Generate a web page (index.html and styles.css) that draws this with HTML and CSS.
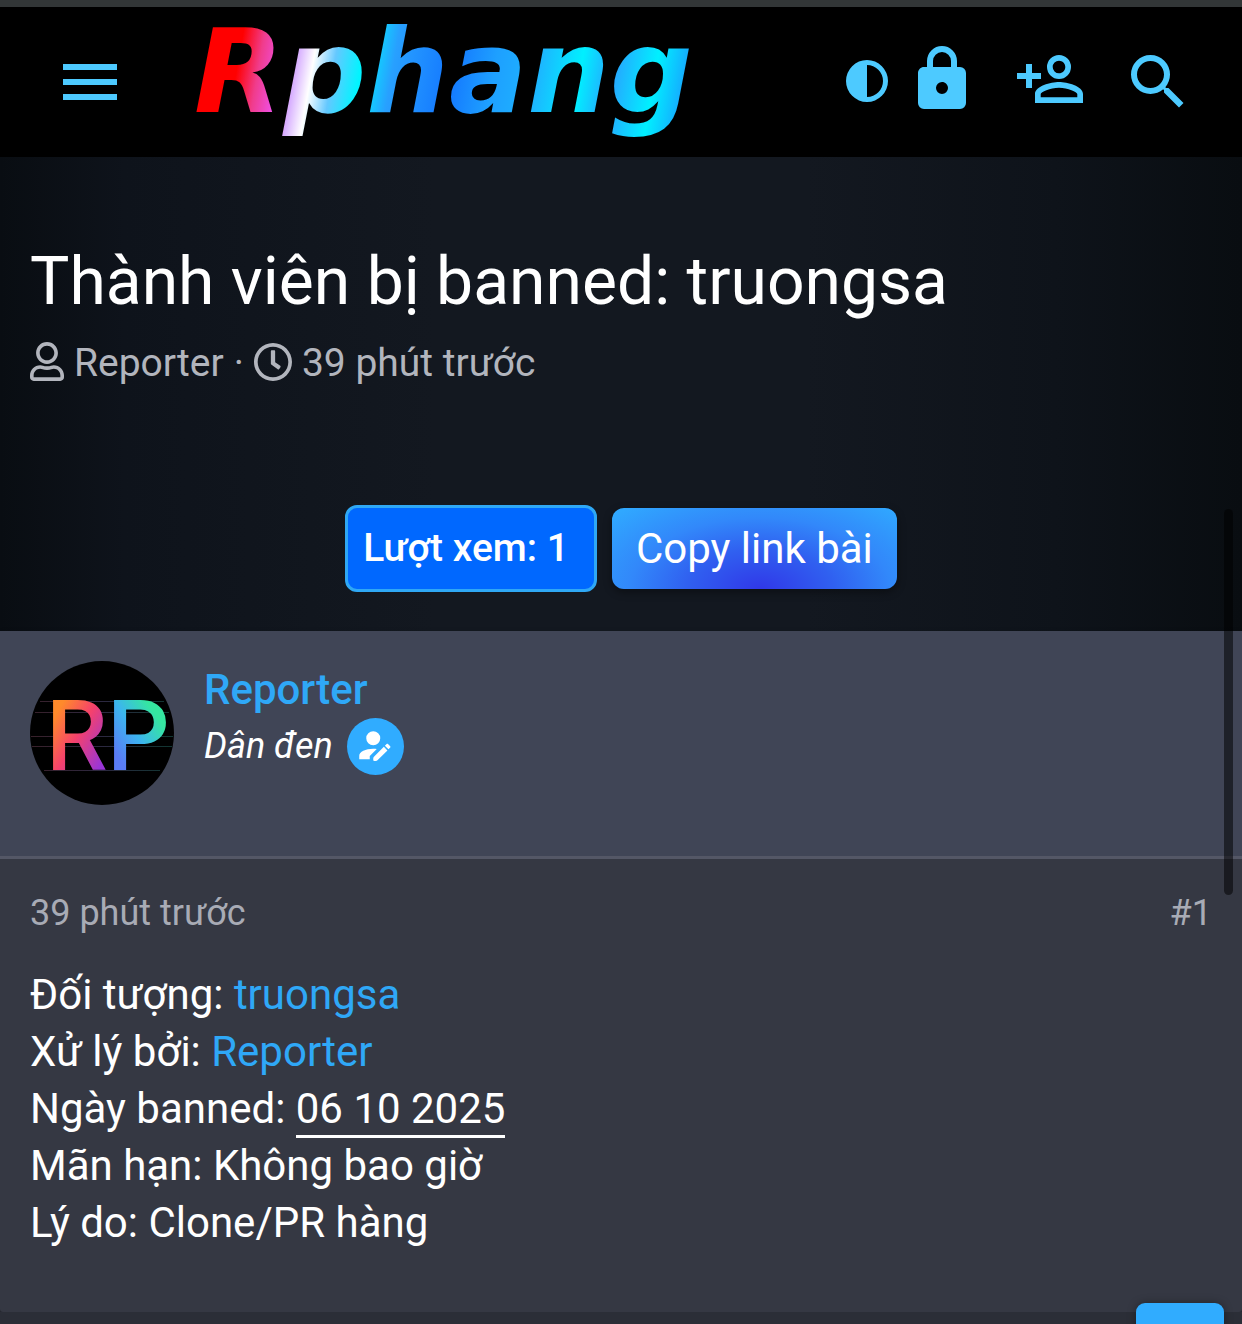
FILE: index.html
```html
<!DOCTYPE html>
<html lang="vi">
<head>
<meta charset="utf-8">
<meta name="viewport" content="width=device-width, initial-scale=1">
<title>Thành viên bị banned: truongsa</title>
<link rel="stylesheet" href="styles.css">
</head>
<body>
<header class="topbar">
  <button class="icon-btn" type="button" aria-label="Menu">
    <svg class="icon" viewBox="0 0 24 24"><path d="M3,6H21V8H3V6M3,11H21V13H3V11M3,16H21V18H3V16Z"/></svg>
  </button>
  <a class="logo" href="#">Rphang</a>
  <nav class="actions">
    <button class="icon-btn contrast" type="button" aria-label="Theme">
      <svg class="icon icon-contrast" viewBox="0 0 42 42"><path fill-rule="evenodd" d="M21 0a21 21 0 1 0 0 42a21 21 0 1 0 0-42M21 5a16 16 0 0 1 0 32z"/></svg>
    </button>
    <a class="icon-btn raised" href="#" aria-label="Login">
      <svg class="icon" viewBox="0 0 24 24"><path d="M12,17A2,2 0 0,0 14,15C14,13.89 13.1,13 12,13A2,2 0 0,0 10,15A2,2 0 0,0 12,17M18,8A2,2 0 0,1 20,10V20A2,2 0 0,1 18,22H6A2,2 0 0,1 4,20V10C4,8.89 4.9,8 6,8H7V6A5,5 0 0,1 12,1A5,5 0 0,1 17,6V8H18M12,3A3,3 0 0,0 9,6V8H15V6A3,3 0 0,0 12,3Z"/></svg>
    </a>
    <a class="icon-btn raised" href="#" aria-label="Register">
      <svg class="icon" viewBox="0 0 24 24"><path d="M15,4A4,4 0 0,0 11,8A4,4 0 0,0 15,12A4,4 0 0,0 19,8A4,4 0 0,0 15,4M15,5.9C16.16,5.9 17.1,6.84 17.1,8C17.1,9.16 16.16,10.1 15,10.1A2.1,2.1 0 0,1 12.9,8A2.1,2.1 0 0,1 15,5.9M4,7V10H1V12H4V15H6V12H9V10H6V7H4M15,13C12.33,13 7,14.33 7,17V20H23V17C23,14.33 17.67,13 15,13M15,14.9C17.97,14.9 21.1,16.36 21.1,17V18.1H8.9V17C8.9,16.36 12,14.9 15,14.9Z"/></svg>
    </a>
    <a class="icon-btn" href="#" aria-label="Search">
      <svg class="icon" viewBox="0 0 24 24"><path d="M9.5,3A6.5,6.5 0 0,1 16,9.5C16,11.11 15.41,12.59 14.44,13.73L14.71,14H15.5L20.5,19L19,20.5L14,15.5V14.71L13.73,14.44C12.59,15.41 11.11,16 9.5,16A6.5,6.5 0 0,1 3,9.5A6.5,6.5 0 0,1 9.5,3M9.5,5C7,5 5,7 5,9.5C5,12 7,14 9.5,14C12,14 14,12 14,9.5C14,7 12,5 9.5,5Z"/></svg>
    </a>
  </nav>
</header>

<main>
  <section class="intro">
    <h1 class="title">Thành viên bị banned: truongsa</h1>
    <div class="meta">
      <svg class="meta-user" viewBox="0 0 448 512" aria-hidden="true"><path d="M313.6 304c-28.7 0-42.5 16-89.6 16-47.1 0-60.8-16-89.6-16C60.2 304 0 364.2 0 438.4V464c0 26.5 21.5 48 48 48h352c26.5 0 48-21.5 48-48v-25.6c0-74.2-60.2-134.4-134.4-134.4zM400 464H48v-25.6c0-47.6 38.8-86.4 86.4-86.4 14.6 0 38.3 16 89.6 16 51.7 0 74.9-16 89.6-16 47.6 0 86.4 38.8 86.4 86.4V464zM224 288c79.5 0 144-64.5 144-144S303.5 0 224 0 80 64.5 80 144s64.5 144 144 144zm0-240c52.9 0 96 43.1 96 96s-43.1 96-96 96-96-43.1-96-96 43.1-96 96-96z"/></svg>
      <a class="meta-link" href="#">Reporter</a>
      <span>·</span>
      <svg class="meta-clock" viewBox="8 8 496 496" aria-hidden="true"><path d="M256 8C119 8 8 119 8 256s111 248 248 248 248-111 248-248S393 8 256 8zm0 448c-110.5 0-200-89.5-200-200S145.5 56 256 56s200 89.5 200 200-89.5 200-200 200zm61.8-104.4l-84.9-61.7c-3.1-2.3-4.9-5.9-4.9-9.7V116c0-6.6 5.4-12 12-12h32c6.6 0 12 5.4 12 12v141.7l66.8 48.6c5.4 3.9 6.5 11.4 2.6 16.8L334.6 349c-3.9 5.3-11.4 6.5-16.8 2.6z"/></svg>
      <time>39 phút trước</time>
    </div>
    <div class="tools">
      <span class="views">Lượt xem: 1</span>
      <button class="copy" type="button">Copy link bài</button>
    </div>
  </section>

  <article class="post">
    <header class="author">
      <svg class="avatar" viewBox="0 0 144 144" role="img" aria-label="Reporter">
        <defs>
          <linearGradient id="r-fill" gradientUnits="userSpaceOnUse" x1="22" y1="60" x2="78" y2="92">
            <stop offset="0" stop-color="#ff8a2b"/><stop offset=".45" stop-color="#f5416c"/><stop offset="1" stop-color="#9a35d8"/>
          </linearGradient>
          <linearGradient id="p-fill" gradientUnits="userSpaceOnUse" x1="84" y1="90" x2="130" y2="60">
            <stop offset="0" stop-color="#5a7cf5"/><stop offset=".5" stop-color="#3cb4f0"/><stop offset="1" stop-color="#35e6a0"/>
          </linearGradient>
          <linearGradient id="line-fill"><stop offset="0" stop-color="#38202a"/><stop offset=".5" stop-color="#2c2840"/><stop offset="1" stop-color="#103631"/></linearGradient>
        </defs>
        <circle cx="72" cy="72" r="72" fill="#000"/>
        <path d="M10 40h124v1H10zM5 51h134v1H5zM1 75h142v1H1zM2 85h140v1H2zM14 109h116v1H14z" fill="url(#line-fill)"/>
        <text class="avatar-text" x="16" y="109" fill="url(#r-fill)">R</text>
        <text class="avatar-text" x="77" y="109" fill="url(#p-fill)">P</text>
      </svg>
      <div class="author-info">
        <a class="author-name" href="#">Reporter</a>
        <div class="author-rank">
          <em>Dân đen</em>
          <span class="badge">
            <svg class="badge-icon" viewBox="1 1 24 24" aria-hidden="true"><path d="M21.7,13.35L20.7,14.35L18.65,12.3L19.65,11.3C19.86,11.09 20.21,11.09 20.42,11.3L21.7,12.58C21.91,12.79 21.91,13.14 21.7,13.35M12.4,18.6L18.06,12.88L20.11,14.93L14.4,20.6Q14,21 13.5,21H12.6Q12,21 12,20.4V19.5Q12,19 12.4,18.6M12,14C7.58,14 4,15.79 4,18V20H10V18.11L14,14.11C13.34,14.03 12.67,14 12,14M12,4A4,4 0 0,0 8,8A4,4 0 0,0 12,12A4,4 0 0,0 16,8A4,4 0 0,0 12,4Z"/></svg>
          </span>
        </div>
      </div>
    </header>
    <div class="post-body">
      <div class="post-info"><time>39 phút trước</time><a class="post-number" href="#">#1</a></div>
      <div class="post-text">
        <div>Đối tượng: <a href="#">truongsa</a></div>
        <div>Xử lý bởi: <a href="#">Reporter</a></div>
        <div>Ngày banned: <span class="date">06 10 2025</span></div>
        <div>Mãn hạn: Không bao giờ</div>
        <div>Lý do: Clone/PR hàng</div>
      </div>
    </div>
  </article>
</main>

<div class="scroll-thumb"></div>
<button class="to-top" type="button" aria-label="Top"></button>
</body>
</html>
```
FILE: styles.css
```css
* { box-sizing: border-box; }

html { background: #2b2e37; }

body {
  margin: 0;
  border-top: 7px solid #323637;
  font-family: Roboto, "Noto Sans", sans-serif;
  color: #fff;
  overflow-x: hidden;
}

a { color: #2fa8f7; text-decoration: none; }

.topbar {
  display: flex;
  align-items: center;
  height: 150px;
  padding: 0 48px 0 54px;
  background: #000;
}

.icon-btn {
  display: flex;
  padding: 0;
  border: 0;
  background: none;
  color: #4dcaff;
}

.raised { padding-bottom: 6px; }
.icon { width: 72px; height: 72px; fill: currentColor; }
.icon-contrast { width: 42px; height: 42px; }
.contrast { margin-right: -18px; padding-bottom: 3px; }

.logo {
  margin-left: 68px;
  padding: 0 12px 20px 0;
  font: italic bold 116px/130px "DejaVu Sans", sans-serif;
  color: transparent;
  background: linear-gradient(100deg, #f00 0%, #f00 10%, #f03c8c 14%, #f050e6 18%, #d8b0ff 21%, #fff 24%, #64c8ff 28%, #00f5ff 33%, #28a0ff 39%, #1478ff 50%, #1ea0ff 58%, #1eb4ff 66%, #00f0ff 74%, #28a4ff 80%, #00f0ff 88%, #1e90ff 96%);
  background-clip: text;
  -webkit-background-clip: text;
}

.actions {
  display: flex;
  align-items: center;
  gap: 36px;
  margin-left: auto;
}

.intro {
  padding: 85px 30px 39px;
  background: linear-gradient(90deg, #090d12 0%, #0e131b 10%, #131820 35%, #131820 65%, #0e131a 85%, #090d11 100%);
}

.title {
  margin: 0;
  font-size: 66px;
  font-weight: 400;
  line-height: 80px;
}

.meta {
  display: flex;
  align-items: center;
  gap: 10px;
  margin-top: 15px;
  font-size: 39px;
  line-height: 52px;
  color: #b2b5bd;
}

.meta-link { color: inherit; }
.meta svg { margin-bottom: 3px; fill: currentColor; }
.meta-user { width: 34px; height: 39px; }
.meta-clock { width: 38px; height: 38px; }

.tools {
  display: flex;
  justify-content: center;
  align-items: center;
  gap: 15px;
  margin-top: 116px;
}

.views {
  padding: 12px 25px 12px 15px;
  border: 3px solid #2fa8f5;
  border-radius: 12px;
  background: #0068ff;
  font-size: 39px;
  font-weight: 500;
  line-height: 57px;
}

.copy {
  padding: 12px 24px;
  border: 0;
  border-radius: 12px;
  background: radial-gradient(ellipse farthest-corner at 52% 100%, #3038e8 0%, #3060f0 35%, #3288fa 62%, #30a8ff 95%);
  box-shadow: 0 3px 9px rgba(0, 0, 0, .4);
  color: #fff;
  font: 42px/57px Roboto, sans-serif;
}

.post {
  border-radius: 3px;
  background: #353843;
  box-shadow: 0 3px 6px rgba(0, 0, 0, .3);
}

.author {
  display: flex;
  gap: 30px;
  padding: 30px 30px 51px;
  border-bottom: 3px solid #545766;
  background: #404556;
}

.avatar { width: 144px; height: 144px; }
.avatar-text { font: 500 98px Roboto, sans-serif; }

.author-name {
  font-size: 42px;
  font-weight: 500;
  line-height: 57px;
}

.author-rank {
  display: flex;
  align-items: center;
  gap: 14px;
  font-size: 36px;
  line-height: 57px;
}

.badge {
  display: grid;
  place-items: center;
  width: 57px;
  height: 57px;
  border-radius: 50%;
  background: #30acff;
}

.badge-icon { width: 42px; height: 42px; fill: #fff; }

.post-body { padding: 30px 30px 61px; }

.post-info {
  display: flex;
  justify-content: space-between;
  font-size: 36px;
  line-height: 48px;
  color: #a8abb5;
}

.post-number { color: inherit; }

.post-text {
  margin-top: 29px;
  font-size: 42px;
  line-height: 57px;
}

.date { padding-bottom: 2px; border-bottom: 3px solid #fff; }

/* Overlays pinned to the window */
.scroll-thumb {
  position: fixed;
  top: 509px;
  right: 9px;
  width: 9px;
  height: 386px;
  border-radius: 5px;
  background: rgba(0, 0, 0, .52);
}

.to-top {
  position: fixed;
  right: 18px;
  bottom: -67px;
  width: 88px;
  height: 88px;
  border: 0;
  border-radius: 9px;
  background: #30acff;
  box-shadow: 0 0 9px rgba(0, 0, 0, .35);
}
```
